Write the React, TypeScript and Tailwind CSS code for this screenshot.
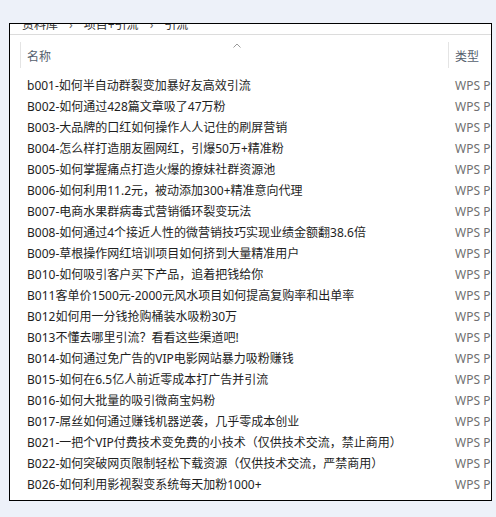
import React from "react";

const files = [
  "b001-如何半自动群裂变加暴好友高效引流",
  "B002-如何通过428篇文章吸了47万粉",
  "B003-大品牌的口红如何操作人人记住的刷屏营销",
  "B004-怎么样打造朋友圈网红，引爆50万+精准粉",
  "B005-如何掌握痛点打造火爆的撩妹社群资源池",
  "B006-如何利用11.2元，被动添加300+精准意向代理",
  "B007-电商水果群病毒式营销循环裂变玩法",
  "B008-如何通过4个接近人性的微营销技巧实现业绩金额翻38.6倍",
  "B009-草根操作网红培训项目如何挤到大量精准用户",
  "B010-如何吸引客户买下产品，追着把钱给你",
  "B011客单价1500元-2000元风水项目如何提高复购率和出单率",
  "B012如何用一分钱抢购桶装水吸粉30万",
  "B013不懂去哪里引流？看看这些渠道吧!",
  "B014-如何通过免广告的VIP电影网站暴力吸粉赚钱",
  "B015-如何在6.5亿人前近零成本打广告并引流",
  "B016-如何大批量的吸引微商宝妈粉",
  "B017-屌丝如何通过赚钱机器逆袭，几乎零成本创业",
  "B021-一把个VIP付费技术变免费的小技术（仅供技术交流，禁止商用）",
  "B022-如何突破网页限制轻松下载资源（仅供技术交流，严禁商用）",
  "B026-如何利用影视裂变系统每天加粉1000+",
];

export default function App() {
  return (
    <div
      className="w-[496px] h-[517px] bg-[#edf1f9] pt-[23px] pl-[9px]"
      style={{ fontFamily: '"Noto Sans", "Noto Sans CJK SC", sans-serif' }}
    >
      <div className="w-[483px] h-[478px] border border-black bg-white overflow-hidden flex flex-col">
        {/* breadcrumb, clipped at the top */}
        <div className="h-[11px] shrink-0 overflow-hidden border-b border-[#dcdcdc]">
          <div className="-mt-[7px] pl-[12px] flex gap-[11px] text-[12px] leading-[16px] text-[#333] whitespace-nowrap">
            <span>资料库</span>
            <span className="text-[#666]">›</span>
            <span>项目+引流</span>
            <span className="text-[#666]">›</span>
            <span>引流</span>
          </div>
        </div>

        {/* column header */}
        <div className="flex h-[40px] shrink-0 pl-[10px] py-[7px] text-[12px] text-[#55606d]">
          <div className="relative w-[428px] border-l border-[#e4e4e4] pl-[6px] pt-[4px] flex items-center">
            名称
            <svg
              className="absolute left-[212px] top-[1px]"
              width="8"
              height="5"
              viewBox="0 0 8 5"
              fill="none"
            >
              <path d="M0.5 4.5L4 1L7.5 4.5" stroke="#9a9a9a" strokeWidth="1" />
            </svg>
          </div>
          <div className="border-l border-[#e4e4e4] pl-[6px] pt-[4px] flex items-center whitespace-nowrap">
            类型
          </div>
        </div>

        {/* rows */}
        <div className="flex flex-col">
          {files.map((name) => (
            <div key={name} className="flex h-[21px] items-center pl-[17px] text-[12px] whitespace-nowrap">
              <div className="w-[428px] shrink-0 text-[#1e1e1e]">{name}</div>
              <div className="text-[#707070]">WPS P</div>
            </div>
          ))}
        </div>
      </div>
    </div>
  );
}
